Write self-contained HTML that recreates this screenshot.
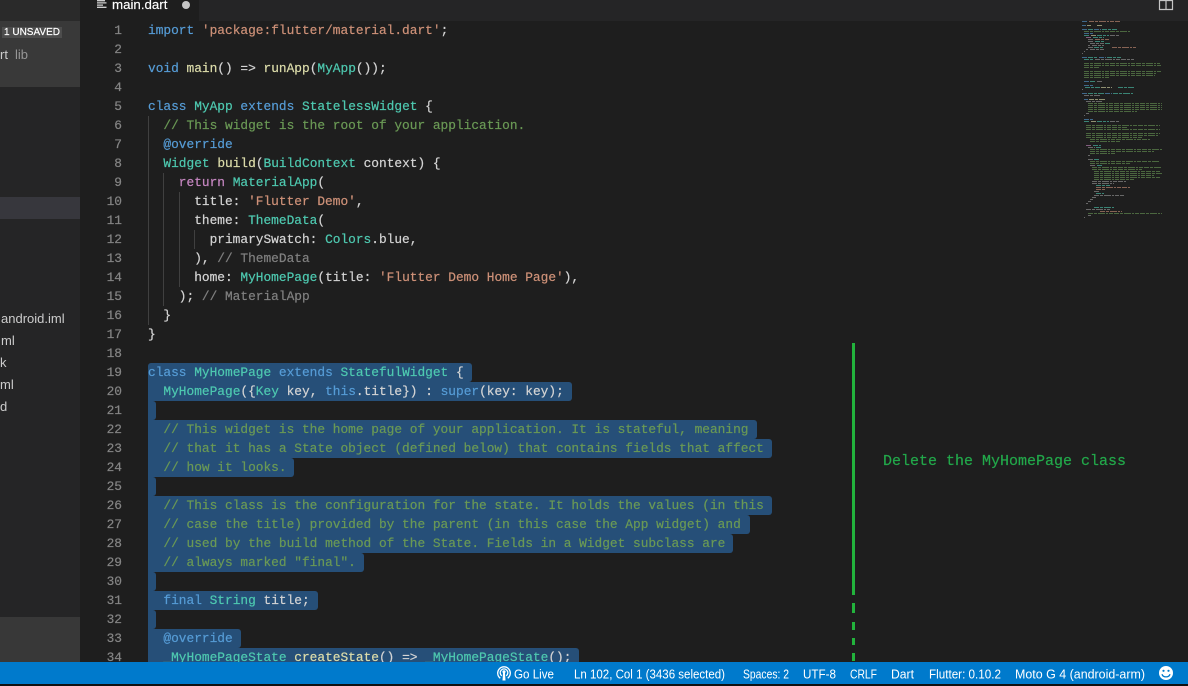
<!DOCTYPE html>
<html><head><meta charset="utf-8"><style>
html,body{margin:0;padding:0;width:1188px;height:686px;overflow:hidden;background:#000}
#r{position:relative;width:1188px;height:686px;overflow:hidden;background:#1e1e1e}
#r div{position:absolute}
pre{position:absolute;margin:0;font:12.83px/19px "Liberation Mono",monospace;white-space:pre;-webkit-text-stroke:.2px}
.s{background:#264f78;left:148px;height:19px;border-radius:0 3px 3px 0}
.g{background:#404040;width:1px}
.k{color:#569cd6}.t{color:#4ec9b0}.f{color:#dcdcaa}.q{color:#ce9178}.c{color:#6a9955}.p{color:#c586c0}.l{color:#808080}
#code{left:148px;top:21px;color:#d4d4d4}
#nums{left:90px;width:32px;top:21px;text-align:right;color:#858585}
.side{font:13px "Liberation Sans",sans-serif;color:#cccccc;white-space:nowrap}
</style></head><body><div id="r">
<div style="left:0;top:0;width:80px;height:662px;background:#252526"></div>
<div style="left:0;top:0;width:80px;height:21px;background:#2a2a2a"></div>
<div style="left:0;top:21px;width:80px;height:66px;background:#393939"></div>
<div style="left:2px;top:27px;width:60px;height:11px;background:#4d4d4d;color:#fff;font:10px/11px 'Liberation Sans',sans-serif;text-align:center;white-space:nowrap;-webkit-text-stroke:.2px">1 UNSAVED</div>
<div class="side" style="left:0;top:47px;line-height:15px">rt</div>
<div class="side" style="left:15px;top:47px;line-height:15px;color:#969696">lib</div>
<div style="left:0;top:197px;width:80px;height:22px;background:#37373d"></div>
<div class="side" style="left:1px;top:311px;line-height:16px">android.iml</div>
<div class="side" style="left:1px;top:333px;line-height:16px">ml</div>
<div class="side" style="left:0;top:355px;line-height:16px">k</div>
<div class="side" style="left:0;top:377px;line-height:16px">ml</div>
<div class="side" style="left:0;top:399px;line-height:16px">d</div>
<div style="left:0;top:617px;width:80px;height:45px;background:#383838"></div>

<div style="left:80px;top:0;width:1108px;height:21px;background:#252526"></div>
<div style="left:80px;top:0;width:119px;height:21px;background:#1e1e1e"></div>
<svg style="position:absolute;left:96px;top:0" width="12" height="10"><path d="M1 .7h8M1 2.9h9.5M1 5.1h6M1 7.3h9.5" stroke="#d0d0d0" stroke-width="1.3" fill="none"/></svg>
<div style="left:112px;top:-3px;font:13.3px/16px 'Liberation Sans',sans-serif;color:#fff;white-space:nowrap;-webkit-text-stroke:.15px">main.dart</div>
<div style="left:182px;top:1px;width:8px;height:8px;border-radius:50%;background:#c5c5c5"></div>
<svg style="position:absolute;left:1158px;top:0" width="16" height="11"><path d="M1.5 -1V9.5H14.5V-1M8 -1V9.5M1.5 .5H14.5" stroke="#c5c5c5" stroke-width="1.2" fill="none"/></svg>

<div class="g" style="left:148px;top:116px;height:209px"></div>
<div class="g" style="left:163px;top:173px;height:133px"></div>
<div class="g" style="left:179px;top:192px;height:95px"></div>
<div class="g" style="left:194px;top:230px;height:19px"></div>

<div class="s" style="top:363px;width:324px;border-radius:3px 3px 3px 0"></div>
<div class="s" style="top:382px;width:424px"></div>
<div class="s" style="top:401px;width:8px"></div>
<div class="s" style="top:420px;width:609px"></div>
<div class="s" style="top:439px;width:624px"></div>
<div class="s" style="top:458px;width:146px"></div>
<div class="s" style="top:477px;width:8px"></div>
<div class="s" style="top:496px;width:624px"></div>
<div class="s" style="top:515px;width:602px"></div>
<div class="s" style="top:534px;width:585px"></div>
<div class="s" style="top:553px;width:216px"></div>
<div class="s" style="top:572px;width:8px"></div>
<div class="s" style="top:591px;width:170px"></div>
<div class="s" style="top:610px;width:8px"></div>
<div class="s" style="top:629px;width:93px"></div>
<div class="s" style="top:648px;width:431px"></div>

<pre id="nums">1
2
3
4
5
6
7
8
9
10
11
12
13
14
15
16
17
18
19
20
21
22
23
24
25
26
27
28
29
30
31
32
33
34</pre>
<pre id="code"><span class="k">import</span> <span class="q">'package:flutter/material.dart'</span>;

<span class="k">void</span> <span class="f">main</span>() =&gt; <span class="f">runApp</span>(<span class="t">MyApp</span>());

<span class="k">class</span> <span class="t">MyApp</span> <span class="k">extends</span> <span class="t">StatelessWidget</span> {
  <span class="c">// This widget is the root of your application.</span>
  <span class="k">@override</span>
  <span class="t">Widget</span> <span class="f">build</span>(<span class="t">BuildContext</span> context) {
    <span class="p">return</span> <span class="t">MaterialApp</span>(
      title: <span class="q">'Flutter Demo'</span>,
      theme: <span class="t">ThemeData</span>(
        primarySwatch: <span class="t">Colors</span>.blue,
      ), <span class="l">// ThemeData</span>
      home: <span class="t">MyHomePage</span>(title: <span class="q">'Flutter Demo Home Page'</span>),
    ); <span class="l">// MaterialApp</span>
  }
}

<span class="k">class</span> <span class="t">MyHomePage</span> <span class="k">extends</span> <span class="t">StatefulWidget</span> {
  <span class="t">MyHomePage</span>({<span class="t">Key</span> key, <span class="k">this</span>.title}) : <span class="k">super</span>(key: key);

  <span class="c">// This widget is the home page of your application. It is stateful, meaning</span>
  <span class="c">// that it has a State object (defined below) that contains fields that affect</span>
  <span class="c">// how it looks.</span>

  <span class="c">// This class is the configuration for the state. It holds the values (in this</span>
  <span class="c">// case the title) provided by the parent (in this case the App widget) and</span>
  <span class="c">// used by the build method of the State. Fields in a Widget subclass are</span>
  <span class="c">// always marked "final".</span>

  <span class="k">final</span> <span class="t">String</span> title;

  <span class="k">@override</span>
  <span class="t">_MyHomePageState</span> <span class="f">createState</span>() =&gt; <span class="t">_MyHomePageState</span>();</pre>

<div style="left:852px;top:343px;width:3px;height:252px;background:#22b33c"></div>
<div style="left:852px;top:603px;width:3px;height:10px;background:#22b33c"></div>
<div style="left:852px;top:622px;width:3px;height:8px;background:#22b33c"></div>
<div style="left:852px;top:638px;width:3px;height:7px;background:#22b33c"></div>
<div style="left:852px;top:653px;width:3px;height:8px;background:#22b33c"></div>
<pre style="left:883px;top:452px;font-size:15px;line-height:20px;color:#22a84a">Delete the MyHomePage class</pre>

<svg style="position:absolute;left:1082px;top:21px" width="90" height="204" fill="none" stroke-width="1" opacity=".6" stroke-dasharray="5 1 3 1 7 1 2 1 4 1">
<path stroke="#569cd6" d="M0 .5h6M0 4.5h4M0 8.5h5M12 8.5h7M2 12.5h9M0 36.5h5M17 36.5h7M2 60.5h5M2 64.5h9M0 72.5h5M23 72.5h7M2 78.5h4M2 98.5h9"/>
<path stroke="#4ec9b0" d="M6 8.5h5M20 8.5h15M2 14.5h6M15 14.5h12M11 16.5h11M13 20.5h9M23 22.5h6M12 26.5h10M6 36.5h10M25 36.5h14M2 38.5h10M8 60.5h6M3 66.5h15M36 66.5h16M6 72.5h16M31 72.5h21M2 100.5h6M15 100.5h12M11 124.5h8M14 126.5h6M12 138.5h6M15 144.5h6M14 164.5h14M14 172.5h8M12 186.5h20"/>
<path stroke="#ce9178" d="M7 .5h31M13 18.5h14M30 26.5h24M14 166.5h34M14 168.5h10M18 190.5h22"/>
<path stroke="#dcdcaa" d="M5 4.5h4M15 4.5h6M9 14.5h5M9 100.5h5M19 66.5h11M7 78.5h16"/>
<path stroke="#c586c0" d="M4 16.5h6M4 124.5h6"/>
<path stroke="#9a9a9a" d="M6 18.5h6M6 20.5h6M8 22.5h14M6 24.5h2M10 24.5h12M6 26.5h5M4 28.5h2M8 28.5h14M2 30.5h1M0 32.5h1M13 38.5h39M15 60.5h6M0 68.5h1M2 74.5h16M4 80.5h16M4 92.5h3M2 94.5h1M28 14.5h10M28 100.5h10M6 126.5h7M6 134.5h2M6 138.5h5M8 144.5h6M10 160.5h34M10 162.5h22M12 170.5h6M12 174.5h30M10 176.5h4M8 178.5h3M6 180.5h3M4 182.5h2M4 188.5h24M6 194.5h3M2 196.5h1"/>
<path stroke="#6a9955" d="M2 10.5h46M2 42.5h76M2 44.5h78M2 46.5h15M2 50.5h78M2 52.5h73M2 54.5h71M2 56.5h25M6 82.5h74M6 84.5h74M6 86.5h74M6 88.5h74M6 90.5h49M4 104.5h74M4 106.5h41M4 108.5h74M4 112.5h74M4 114.5h72M4 116.5h56M8 118.5h60M8 120.5h30M8 128.5h72M8 130.5h64M8 132.5h26M8 140.5h70M8 142.5h40M10 146.5h70M10 148.5h50M12 150.5h66M12 152.5h68M12 154.5h60M12 156.5h66M12 158.5h40M6 192.5h74"/>
</svg>

<div style="left:0;top:662px;width:1188px;height:22px;background:#007acc"></div>
<div style="left:0;top:684px;width:1188px;height:2px;background:#111"></div>
<svg style="position:absolute;left:0;top:662px" width="1188" height="22" font-family="Liberation Sans,sans-serif" font-size="13" fill="#fff">
<g fill="none" stroke="#fff" stroke-width="1.3"><path d="M500.3 16.2a6.3 6.3 0 1 1 7.4 0"/><path d="M501.8 13.8a3.8 3.8 0 1 1 4.4 0"/></g>
<path d="M504 8.2a1.6 1.6 0 0 1 1.6 1.6c0 .6-.3 1-.6 1.3l.5 7.4h-3l.5-7.4c-.3-.3-.6-.7-.6-1.3A1.6 1.6 0 0 1 504 8.2z"/>
<text x="514" y="16.5" textLength="40" lengthAdjust="spacingAndGlyphs">Go Live</text>
<text x="574" y="16.5" textLength="151" lengthAdjust="spacingAndGlyphs">Ln 102, Col 1 (3436 selected)</text>
<text x="743" y="16.5" textLength="46" lengthAdjust="spacingAndGlyphs">Spaces: 2</text>
<text x="803" y="16.5" textLength="33" lengthAdjust="spacingAndGlyphs">UTF-8</text>
<text x="850" y="16.5" textLength="27" lengthAdjust="spacingAndGlyphs">CRLF</text>
<text x="891" y="16.5" textLength="23" lengthAdjust="spacingAndGlyphs">Dart</text>
<text x="929" y="16.5" textLength="72" lengthAdjust="spacingAndGlyphs">Flutter: 0.10.2</text>
<text x="1015" y="16.5" textLength="130" lengthAdjust="spacingAndGlyphs">Moto G 4 (android-arm)</text>
<circle cx="1166" cy="11" r="7" fill="#fff"/>
<circle cx="1163.5" cy="8.8" r="1.1" fill="#007acc"/><circle cx="1168.5" cy="8.8" r="1.1" fill="#007acc"/>
<path d="M1162 12.2c1 3.6 7 3.6 8 0" stroke="#007acc" stroke-width="1.3" fill="none"/>
</svg>
</div></body></html>
